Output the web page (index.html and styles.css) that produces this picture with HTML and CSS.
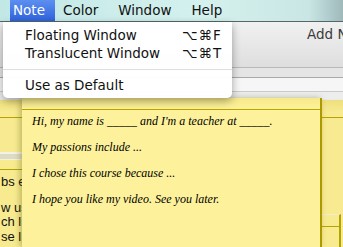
FILE: index.html
```html
<!DOCTYPE html>
<html lang="en">
<head>
    <meta charset="UTF-8">
    <title>Notes</title>
    <link rel="stylesheet" href="styles.css">
</head>
<body>
    <div class="menubar">
        <div class="menu-item active">Note</div>
        <div class="menu-item">Color</div>
        <div class="menu-item">Window</div>
        <div class="menu-item">Help</div>
    </div>

    <div class="toolbar">
        <div class="toolbar-main"><span class="add-note">Add N</span></div>
        <div class="band band-a"></div>
        <div class="band band-b"></div>
        <div class="band band-c"></div>
    </div>

    <div class="desktop">
        <div class="note back-note">
            <div class="note-head"></div>
        </div>

        <div class="note tabs-note">
            <div class="note-head"></div>
            <div class="tabs-text">
                <p>bs e</p>
                <p>w us<br>ch lis<br>se lis</p>
            </div>
        </div>

        <div class="note side-note">
            <div class="note-head"></div>
        </div>

        <div class="note front-note">
            <div class="note-head"></div>
            <div class="note-body">
                <p>Hi, my name is _____ and I'm a teacher at _____.</p>
                <p>My passions include ...</p>
                <p>I chose this course because ...</p>
                <p>I hope you like my video. See you later.</p>
            </div>
        </div>
    </div>

    <div class="dropdown">
        <div class="drop-item"><span>Floating Window</span><span class="keys">⌥⌘F</span></div>
        <div class="drop-item"><span>Translucent Window</span><span class="keys">⌥⌘T</span></div>
        <div class="separator"></div>
        <div class="drop-item"><span>Use as Default</span></div>
    </div>
</body>
</html>
```

FILE: styles.css
```css
* { margin: 0; padding: 0; box-sizing: border-box; }
body { width: 343px; height: 247px; overflow: hidden; position: relative; background-color: #e9e9e9; font-family: 'DejaVu Sans', sans-serif; font-size: 13px; color: #111; }

.menubar { height: 22px; display: flex; gap: 20px; padding-left: 10px; background: linear-gradient(to right, #c2e8e6 0%, #d4f1ee 60%, #c9e6e4 90%, #9fb9bb 100%); border-bottom: 1px solid #566768; }
.menu-item { line-height: 21px; font-size: 13.5px; }
.menu-item.active { padding: 0 10px 0 3px; margin-right: -12px; background: linear-gradient(to bottom, #5d8ff0, #2f63dc); color: #fff; }

.toolbar { height: 78px; }
.toolbar-main { height: 46px; padding: 4px 0 0 307px; background: linear-gradient(to bottom, #f1f1f1, #dedede); border-bottom: 1px solid #b9b9b9; white-space: nowrap; }
.add-note { font-size: 13.5px; color: #3a3a3a; }
.band { border-bottom: 1px solid #a9a9a9; }
.band-a { height: 10px; background-color: #e5e5e5; }
.band-b { height: 14px; background-color: #f6f6f6; border-bottom-color: #cacaca; }
.band-c { height: 7px; background-color: #ededed; border-bottom: none; }

.desktop { position: relative; height: 147px; }
.note { position: absolute; background-color: #f7ea8f; }
.note-head { border-bottom: 1px solid #b7a300; }

.back-note { left: 0; right: 0; top: 0; bottom: 0; background: linear-gradient(to bottom, #efe07e, #f7ea90 12px); }
.back-note .note-head { height: 18px; }

.tabs-note { left: 0; top: 52px; width: 80px; bottom: 0; border-top: 2px solid #f4f2e6; }
.tabs-note::before { content: ''; display: block; height: 5px; background-color: #dedbc4; border-bottom: 1px solid #f6f3dc; }
.tabs-note .note-head { height: 10px; }
.tabs-text { padding: 5px 0 0 1px; font-family: 'Liberation Sans', sans-serif; font-size: 13px; line-height: 14.5px; }
.tabs-text p { margin-bottom: 11px; }

.side-note { left: 322px; top: 114px; width: 19px; bottom: 0; border-top: 1px solid #efeccf; border-right: 2px solid #b3a200; }
.side-note .note-head { height: 12px; }

.front-note { left: 22px; top: -2px; width: 300px; bottom: 0; background-color: #fdf29b; border-right: 2px solid #ab9a00; box-shadow: -2px 0 6px rgba(90, 80, 0, 0.35); }
.front-note .note-head { height: 12px; background: linear-gradient(to bottom, #f6e98a, #fdf29b); border-bottom-color: #baa600; }
.note-body { padding: 3px 0 0 10px; font-family: 'Liberation Serif', serif; font-style: italic; font-size: 12px; line-height: 16px; color: #000; }
.note-body p { margin-bottom: 10px; }

.dropdown { position: absolute; left: 3px; top: 22px; width: 229px; height: 76px; padding-top: 4px; background-color: rgba(255, 255, 255, 0.97); border-radius: 0 0 5px 5px; box-shadow: 0 3px 9px rgba(0, 0, 0, 0.35); }
.drop-item { display: flex; justify-content: space-between; height: 18px; line-height: 18px; padding: 0 12px 0 22px; font-size: 13.5px; }
.keys { width: 38px; letter-spacing: 1px; }
.separator { height: 1px; margin: 7px 0 6px; background-color: #dedede; }
```
